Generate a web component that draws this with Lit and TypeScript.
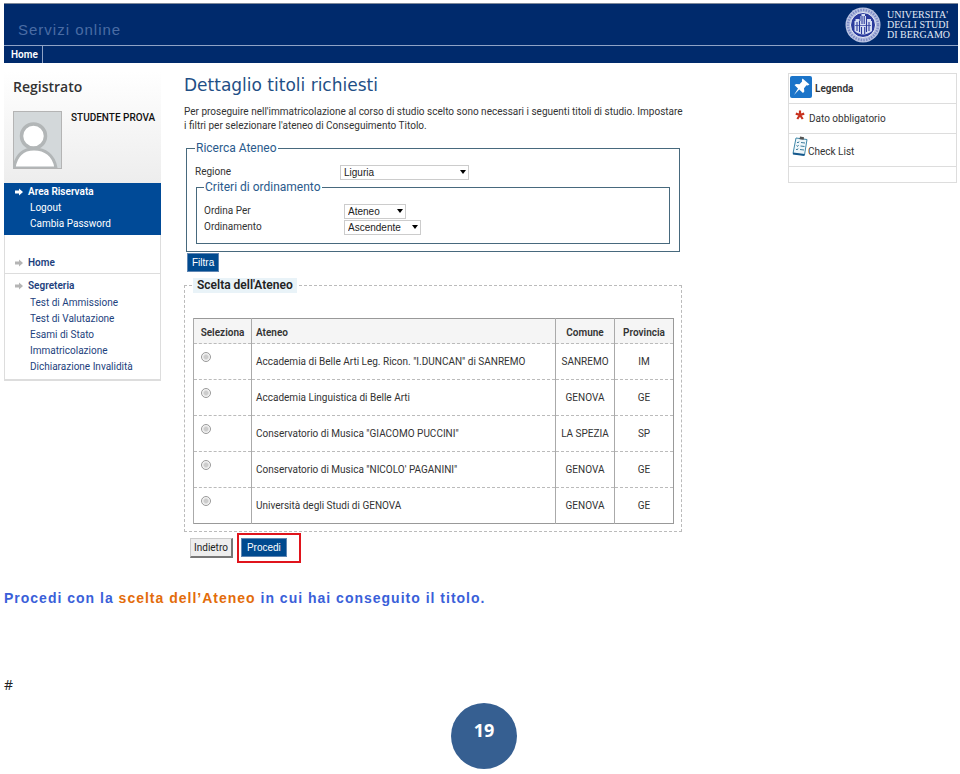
import { LitElement, html, css } from "lit";
import { customElement, property, state } from "lit/decorators.js";

interface Ateneo {
  nome: string;
  comune: string;
  provincia: string;
}

const ATENEI: Ateneo[] = [
  { nome: 'Accademia di Belle Arti Leg. Ricon. "I.DUNCAN" di SANREMO', comune: "SANREMO", provincia: "IM" },
  { nome: "Accademia Linguistica di Belle Arti", comune: "GENOVA", provincia: "GE" },
  { nome: 'Conservatorio di Musica "GIACOMO PUCCINI"', comune: "LA SPEZIA", provincia: "SP" },
  { nome: "Conservatorio di Musica \"NICOLO' PAGANINI\"", comune: "GENOVA", provincia: "GE" },
  { nome: "Università degli Studi di GENOVA", comune: "GENOVA", provincia: "GE" },
];

const SEGRETERIA = [
  "Test di Ammissione",
  "Test di Valutazione",
  "Esami di Stato",
  "Immatricolazione",
  "Dichiarazione Invalidità",
];

const arrow = html`<svg class="arrow" viewBox="0 0 8 8" aria-hidden="true">
  <path d="M0 2.6h4V.4L8 4 4 7.6V5.4H0z" fill="currentColor" />
</svg>`;

@customElement("site-header")
class SiteHeader extends LitElement {
  static styles = css`
    :host { display: block; background: #002a6c; color: #dfe8f5; border-top: 1px solid #7d8899; }
    .banner { display: flex; justify-content: space-between; align-items: center; height: 41px; padding: 0 8px 0 14px; border-bottom: 1px solid #8fa3c6; }
    .name { font: 15px/20px "Liberation Sans", Arial, sans-serif; letter-spacing: 1px; color: #4a6ca4; padding-top: 11px; }
    .brand { display: flex; align-items: center; gap: 6px; }
    .seal { width: 36px; height: 36px; display: block; }
    .uni { font: 10px/10px "Liberation Serif", serif; color: #e4ebf6; margin: 0; }
    .uni span { display: block; }
    nav { display: flex; height: 17px; }
    a { font: 600 10px/17px Roboto, sans-serif; color: #fff; text-decoration: none; padding: 0 4px 0 7px; border-right: 1px solid #8fa3c6; }
  `;
  render() {
    return html`
      <div class="banner">
        <div class="name">Servizi online</div>
        <div class="brand">
          <svg class="seal" viewBox="0 0 36 36" aria-hidden="true">
            <circle cx="18" cy="18" r="17.5" fill="#b9c3e2" />
            <circle cx="18" cy="18" r="15" fill="none" stroke="#7f8cc6" stroke-width="2.5" stroke-dasharray="1.5 1.2" />
            <circle cx="18" cy="18" r="12.5" fill="#2a3a9c" stroke="#eef1fa" />
            <path d="M9.500 24V14h1v-2h4v2h1V9h1V7h3.500v2h1v5h1v-2h4v2h1v10c-5 4.500-12.500 4.500-17.500 0z" fill="#d6def3" />
            <path d="M12 15v9M14.500 14v11M17 9v8M19.200 9v8M21.500 14v11M24 15v9M16.500 20v7M19.700 20v7" stroke="#2a3a9c" stroke-width="1.1" fill="none" />
            <path d="M10 18.500h16" stroke="#2a3a9c" stroke-width=".7" />
          </svg>
          <p class="uni"><span>UNIVERSITA'</span><span>DEGLI STUDI</span><span>DI BERGAMO</span></p>
        </div>
      </div>
      <nav><a href="#home">Home</a></nav>
    `;
  }
}

@customElement("user-sidebar")
class UserSidebar extends LitElement {
  static styles = css`
    :host { display: block; font: 10px/16px Roboto, sans-serif; }
    .user { height: 112px; padding: 7px 9px; box-sizing: border-box; background: linear-gradient(#fff, #ededed); }
    h2 { font: 600 14px/18px "Open Sans", sans-serif; color: #333; margin: 0 0 15px; }
    .who { display: flex; gap: 9px; }
    .avatar { width: 49px; height: 58px; display: block; flex: none; }
    .who strong { font-weight: 500; line-height: 14px; color: #111; white-space: nowrap; }
    ul { list-style: none; margin: 0; padding: 0; }
    a { color: inherit; text-decoration: none; }
    .reserved { background: #004a97; color: #fff; padding: 1px 0 3px; }
    .head { display: flex; align-items: center; gap: 5px; padding-left: 11px; font-weight: 600; }
    .sub { padding-left: 26px; }
    .arrow { width: 8px; height: 8px; }
    .menu { border: 1px solid #ddd; border-top: 0; border-bottom-width: 2px; color: #1d3f7d; padding-top: 20px; padding-bottom: 4px; }
    .menu .arrow { color: #b5b5b5; }
    .menu .head { padding-left: 10px; }
    .menu .sub { padding-left: 25px; }
    .home { border-bottom: 1px solid #ddd; padding-bottom: 2px; margin-bottom: 4px; }
    .menu .head + .sub { padding-top: 1px; }
  `;
  render() {
    return html`
      <div class="user">
        <h2>Registrato</h2>
        <div class="who">
          <svg class="avatar" viewBox="0 0 49 58" aria-hidden="true">
            <rect x=".5" y=".5" width="48" height="57" fill="#d3d8da" stroke="#b4b4b4" />
            <path d="M1 57c2-13 9-19 20-19s20 6 22 19z" fill="#fff" stroke="#b2b6b7" stroke-width="3" />
            <circle cx="20.500" cy="25" r="12" fill="#fff" stroke="#b2b6b7" stroke-width="3.500" />
            <path d="M.5 57.500h48" stroke="#b4b4b4" />
          </svg>
          <strong>STUDENTE PROVA</strong>
        </div>
      </div>
      <ul class="reserved">
        <li class="head">${arrow}<a href="#area">Area Riservata</a></li>
        <li class="sub"><a href="#logout">Logout</a></li>
        <li class="sub"><a href="#password">Cambia Password</a></li>
      </ul>
      <ul class="menu">
        <li class="head home">${arrow}<a href="#home">Home</a></li>
        <li class="head">${arrow}<a href="#segreteria">Segreteria</a></li>
        ${SEGRETERIA.map((v) => html`<li class="sub"><a href="#voce">${v}</a></li>`)}
      </ul>
    `;
  }
}

@customElement("legend-panel")
class LegendPanel extends LitElement {
  static styles = css`
    :host { display: block; border: 1px solid #ddd; font: 10px/14px Roboto, sans-serif; color: #333; }
    .row { display: flex; align-items: center; box-sizing: border-box; height: 30px; border-bottom: 1px solid #ddd; }
    .title { font-weight: 600; gap: 3px; padding: 0 1px; }
    .pin { width: 22px; height: 22px; margin-bottom: 4px; }
    .req { gap: 4px; padding-left: 6px; }
    .check { height: 33px; padding-left: 3px; }
    .check span { padding-top: 4px; }
    .last { height: 15px; border: 0; }
    svg { display: block; flex: none; }
    .star { width: 10px; height: 10px; margin-bottom: 8px; }
    .list { width: 16px; height: 20px; margin-bottom: 8px; }
  `;
  render() {
    return html`
      <div class="row title">
        <svg class="pin" viewBox="0 0 22 22" aria-hidden="true">
          <rect width="22" height="22" rx="2" fill="#1b74c9" />
          <path d="M12.500 2.500l7 6-1.800.9-1.200-.2-2.500 3 .3 3.300-1.300 1.500-3.800-3.500L4 19l4-6.500L4.500 9l1.700-1.100 3.300.3 2.600-2.700-.2-1.400z" fill="#fff" />
        </svg>
        <span>Legenda</span>
      </div>
      <div class="row req">
        <svg class="star" viewBox="0 0 10 10" aria-hidden="true">
          <path d="M5 5V.5M5 5L.8 3.600M5 5l4.200-1.400M5 5L2.300 9M5 5l2.700 4" stroke="#c8321f" stroke-width="2.200" />
        </svg>
        <span>Dato obbligatorio</span>
      </div>
      <div class="row check">
        <svg class="list" viewBox="0 0 16 20" aria-hidden="true">
          <path d="M4 2l11 1.500L12.500 19 1 17.500z" fill="#eef6fa" stroke="#3f87a8" />
          <path d="M1 17.500L12.500 19" stroke="#15588c" stroke-width="2" />
          <path d="M8 .5l4 .8-.3 2.500-4.200-.6z" fill="#555" />
          <path d="M5 6l1 1 1-1.500M9 6.500l4 .5M4.500 9.500l1 1 1-1.500M8.500 10l4 .5M4 13l1 1 1-1.500M8 13.500l4 .5" stroke="#3b7c9c" fill="none" />
        </svg>
        <span>Check List</span>
      </div>
      <div class="row last"></div>
    `;
  }
}

@customElement("filter-form")
class FilterForm extends LitElement {
  static styles = css`
    :host { display: block; font: 10px/14px Roboto, sans-serif; color: #333; }
    fieldset { margin: 0; min-width: 0; border: 1px solid #47697d; box-sizing: border-box; }
    legend { font-size: 12px; line-height: 14px; color: #2a5a8c; padding: 0 1px; }
    .outer { padding: 9px 9px 7px 8px; }
    .inner { padding: 9px 7px 8px; margin-left: 1px; }
    .row { display: grid; grid-template-columns: 140px 1fr; align-items: center; height: 16px; }
    .outer > .row { grid-template-columns: 145px 1fr; }
    select {
      appearance: none; height: 15px; box-sizing: border-box; border: 1px solid #ccc; border-radius: 0; margin: 0;
      padding: 0 3px; font: 10px/13px "Liberation Sans", Arial, sans-serif; color: #222; background: #fff;
      justify-self: start; grid-area: 1 / 1;
    }
    .pick { display: grid; justify-self: start; align-items: center; }
    .pick::after { content: ""; grid-area: 1 / 1; justify-self: end; margin-right: 3px; border: 3px solid transparent; border-top: 4px solid #000; border-bottom: 0; pointer-events: none; }
    .wide { width: 129px; }
    .mid { width: 62px; }
    .large { width: 77px; }
    button { font: 10px/15px "Liberation Sans", Arial, sans-serif; color: #fff; background: #004a8f; border: 1px solid #5f86b3; height: 19px; padding: 0 4px; margin: 1px 0 0 1px; display: block; }
  `;
  render() {
    return html`
      <fieldset class="outer">
        <legend>Ricerca Ateneo</legend>
        <div class="row">
          <label for="regione">Regione</label>
          <span class="pick"><select id="regione" class="wide"><option>Liguria</option></select></span>
        </div>
        <fieldset class="inner">
          <legend>Criteri di ordinamento</legend>
          <div class="row">
            <label for="ordina">Ordina Per</label>
            <span class="pick"><select id="ordina" class="mid"><option>Ateneo</option></select></span>
          </div>
          <div class="row">
            <label for="verso">Ordinamento</label>
            <span class="pick"><select id="verso" class="large"><option>Ascendente</option><option>Discendente</option></select></span>
          </div>
        </fieldset>
      </fieldset>
      <button type="button">Filtra</button>
    `;
  }
}

@customElement("ateneo-table")
class AteneoTable extends LitElement {
  @property({ attribute: false }) rows: Ateneo[] = [];
  @state() private selected = -1;
  static styles = css`
    :host { display: block; font: 10px/14px Roboto, sans-serif; color: #333; }
    fieldset { margin: 0; min-width: 0; border: 1px dashed #bbb; padding: 25px 7px 7px 8px; }
    legend { font: 600 12px/15px Roboto, sans-serif; color: #222; background: #e9f3f8; padding: 0 4px; }
    table { width: 100%; border-collapse: collapse; border: 1px solid #999; table-layout: fixed; }
    th, td { border: 1px dashed #bbb; border-left: 1px solid #aaa; box-sizing: border-box; padding: 0 4px; text-align: center; }
    th { height: 25px; font-weight: 600; background: #f5f5f5; padding-top: 4px; }
    td { height: 36px; }
    .sel { width: 58px; }
    .com, .pro { width: 59px; }
    .name { text-align: left; }
    .radio { text-align: left; vertical-align: top; padding: 8px 7px 0; }
    input { appearance: none; display: block; margin: 0; width: 10px; height: 10px; border: 1px solid #999; border-radius: 50%; background: radial-gradient(#ccc 30%, #f4f4f4 60%); }
    input:checked { background: radial-gradient(#234 30%, #f4f4f4 60%); }
  `;
  render() {
    return html`
      <fieldset>
        <legend>Scelta dell'Ateneo</legend>
        <table>
          <thead>
            <tr><th class="sel">Seleziona</th><th class="name">Ateneo</th><th class="com">Comune</th><th class="pro">Provincia</th></tr>
          </thead>
          <tbody>
            ${this.rows.map((r, i) => html`<tr>
              <td class="radio"><input type="radio" name="ateneo" id="a${i}" .checked=${this.selected === i} @change=${() => (this.selected = i)} /></td>
              <td class="name"><label for="a${i}">${r.nome}</label></td>
              <td>${r.comune}</td>
              <td>${r.provincia}</td>
            </tr>`)}
          </tbody>
        </table>
      </fieldset>
    `;
  }
}

@customElement("app-root")
class AppRoot extends LitElement {
  static styles = css`
    :host { display: block; padding: 3px 2px 4px 4px; background: #fff; font: 10px/14px Roboto, sans-serif; color: #333; }
    .cols { display: grid; grid-template-columns: 157px minmax(0, 1fr) 170px; align-items: start; padding-top: 8px; }
    main { padding: 3px 104px 0 23px; }
    h1 { font: 17px/22px "DejaVu Sans", Verdana, sans-serif; color: #1f4f86; margin: 0 0 9px; }
    .intro { margin: 0 0 8px; }
    legend-panel { margin: 2px 1px 0 0; }
    filter-form { margin: 0 4px 6px 2px; }
    ateneo-table { margin-right: 2px; }
    .actions { display: flex; align-items: center; gap: 4px; padding: 1px 0 0 6px; }
    button { font: 10px/16px Roboto, sans-serif; height: 20px; padding: 0 3px; color: #222; background: #eee; border: 1px solid #ccc; border-right: 2px solid #777; border-bottom: 2px solid #777; }
    .frame { border: 2px solid #e0141c; padding: 3px 12px 4px 2px; display: flex; }
    .go { font: 10px/15px "Liberation Sans", Arial, sans-serif; color: #fff; background: #004a8f; border: 1px solid #5f86b3; padding: 0 5px; height: 19px; }
    .note { font: bold 14px/18px "Liberation Sans", Arial, sans-serif; letter-spacing: 1px; color: #3a5fd9; margin: 26px 0 0; }
    .note em { font-style: normal; color: #e36c0a; }
    .mark { font: 14px/18px "Open Sans", sans-serif; color: #222; margin: 69px 0 9px; }
    footer { padding-left: 6px; }
    .page { width: 66px; height: 66px; box-sizing: border-box; border-radius: 50%; background: #365f91; color: #fff; font: bold 18px/22px "Open Sans", sans-serif; text-align: center; padding-top: 16px; margin: 0 auto; }
  `;
  render() {
    return html`
      <site-header></site-header>
      <div class="cols">
        <user-sidebar></user-sidebar>
        <main>
          <h1>Dettaglio titoli richiesti</h1>
          <p class="intro">Per proseguire nell'immatricolazione al corso di studio scelto sono necessari i seguenti titoli di studio. Impostare i filtri per selezionare l'ateneo di Conseguimento Titolo.</p>
          <filter-form></filter-form>
          <ateneo-table .rows=${ATENEI}></ateneo-table>
          <div class="actions">
            <button type="button">Indietro</button>
            <div class="frame"><button type="button" class="go">Procedi</button></div>
          </div>
        </main>
        <legend-panel></legend-panel>
      </div>
      <p class="note">Procedi con la <em>scelta dell’Ateneo</em> in cui hai conseguito il titolo.</p>
      <p class="mark">#</p>
      <footer><div class="page">19</div></footer>
    `;
  }
}
